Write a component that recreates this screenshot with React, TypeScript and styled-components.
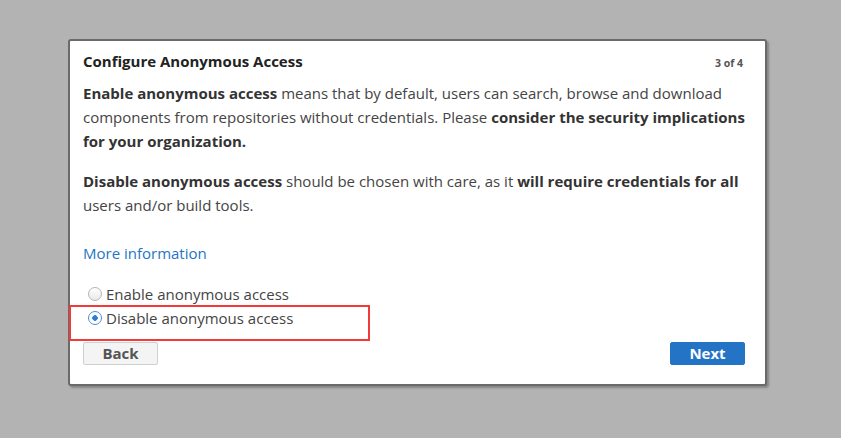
import React from "react";
import styled, { createGlobalStyle } from "styled-components";

const Global = createGlobalStyle`
  html, body { margin: 0; padding: 0; }
  body {
    background: #b3b3b3;
    font-family: "Open Sans", Lato, Arial, sans-serif;
    width: 841px;
    height: 438px;
    overflow: hidden;
  }
`;

const Page = styled.div`
  padding: 39px 0 0 68px;
`;

const Dialog = styled.div`
  position: relative;
  box-sizing: border-box;
  width: 699px;
  height: 347px;
  background: #fff;
  border: 2px solid #6a6a6a;
  border-radius: 3px;
  box-shadow: 2px 2px 2px rgba(0, 0, 0, 0.25);
  padding: 10px 20px 0 13px;
  display: flex;
  flex-direction: column;
  color: #444;
`;

const Header = styled.div`
  display: flex;
  justify-content: space-between;
  align-items: baseline;
  height: 20px;
`;

const Title = styled.h1`
  margin: 0;
  font-size: 15px;
  font-weight: 700;
  color: #222;
`;

const Step = styled.span`
  font-size: 10.5px;
  font-weight: 700;
  color: #555;
  margin-right: 2px;
`;

const Para = styled.p<{ $mt?: number }>`
  margin: ${(p) => p.$mt ?? 0}px 0 0;
  font-size: 15px;
  line-height: 24px;
  color: #444;
  b { color: #333; font-weight: 700; }
`;

const Link = styled.a`
  margin-top: 24px;
  font-size: 15px;
  line-height: 24px;
  color: #2476c3;
  text-decoration: none;
`;

const Radios = styled.div`
  margin-top: 17px;
  display: flex;
  flex-direction: column;
`;

const RadioRow = styled.label`
  display: flex;
  align-items: center;
  height: 24px;
  padding-left: 5px;
  font-size: 15px;
  color: #444;
`;

const RadioDot = styled.span<{ $on?: boolean }>`
  box-sizing: border-box;
  width: 14px;
  height: 14px;
  border-radius: 50%;
  margin-right: 4px;
  border: 1px solid ${(p) => (p.$on ? "#4a8fd6" : "#b5b5b5")};
  background: ${(p) =>
    p.$on
      ? "radial-gradient(circle, #2f7dd0 0 2.5px, #fff 3px)"
      : "linear-gradient(#fff, #e9e9e9)"};
`;

const Footer = styled.div`
  display: flex;
  justify-content: space-between;
  align-items: center;
  margin-top: 12px;
`;

const Button = styled.button<{ $primary?: boolean }>`
  box-sizing: border-box;
  width: 75px;
  height: 23px;
  border-radius: 2px;
  font-family: inherit;
  font-size: 15px;
  line-height: 1;
  font-weight: 700;
  padding: 0;
  border: 1px solid ${(p) => (p.$primary ? "#2474c6" : "#cfcfcf")};
  background: ${(p) => (p.$primary ? "#2474c6" : "#f4f4f4")};
  color: ${(p) => (p.$primary ? "#fff" : "#555")};
`;

const Highlight = styled.div`
  position: absolute;
  left: -1px;
  top: 264px;
  width: 297px;
  height: 32px;
  border: 2px solid #f33a3a;
  pointer-events: none;
`;

export default function App() {
  return (
    <>
      <Global />
      <Page>
        <Dialog>
          <Header>
            <Title>Configure Anonymous Access</Title>
            <Step>3 of 4</Step>
          </Header>
          <Para $mt={10}>
            <b>Enable anonymous access</b> means that by default, users can search, browse and download
            components from repositories without credentials. Please{" "}
            <b>consider the security implications for your organization.</b>
          </Para>
          <Para $mt={16}>
            <b>Disable anonymous access</b> should be chosen with care, as it{" "}
            <b>will require credentials for all</b> users and/or build tools.
          </Para>
          <Link href="#">More information</Link>
          <Radios>
            <RadioRow>
              <RadioDot />
              Enable anonymous access
            </RadioRow>
            <RadioRow>
              <RadioDot $on />
              Disable anonymous access
            </RadioRow>
          </Radios>
          <Footer>
            <Button>Back</Button>
            <Button $primary>Next</Button>
          </Footer>
          <Highlight />
        </Dialog>
      </Page>
    </>
  );
}
